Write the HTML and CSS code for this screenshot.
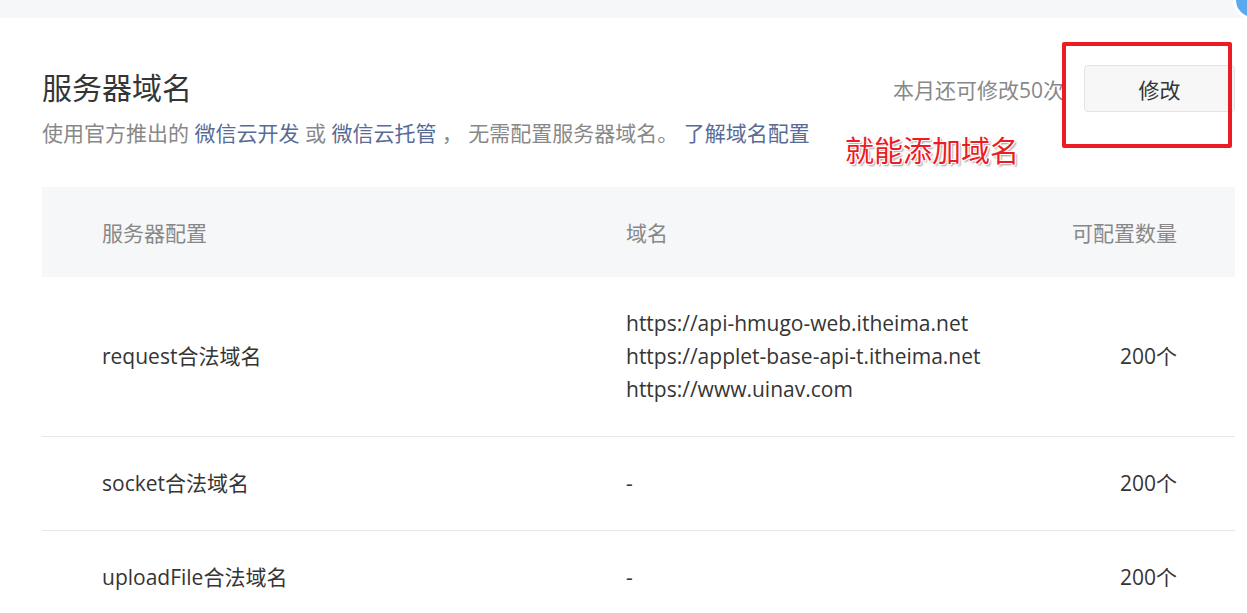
FILE: index.html
```html
<!DOCTYPE html>
<html lang="zh-CN">
<head>
  <meta charset="UTF-8">
  <meta name="viewport" content="width=device-width, initial-scale=1.0">
  <title>服务器域名</title>
  <link rel="stylesheet" href="styles.css">
</head>
<body>
  <div class="topbar">
    <span class="avatar"></span>
  </div>

  <div class="card">
    <div class="head">
      <div class="head-main">
        <h2 class="title">服务器域名</h2>
        <p class="desc">使用官方推出的 <a href="#">微信云开发</a> 或 <a href="#">微信云托管</a> ， 无需配置服务器域名。 <a href="#">了解域名配置</a></p>
      </div>
      <div class="head-side">
        <span class="quota">本月还可修改50次</span>
        <button type="button" class="btn">修改</button>
      </div>
    </div>

    <div class="mark"></div>
    <div class="note">就能添加域名</div>

    <table class="domains">
      <thead>
        <tr>
          <th class="col-name">服务器配置</th>
          <th class="col-domain">域名</th>
          <th class="col-count">可配置数量</th>
        </tr>
      </thead>
      <tbody>
        <tr>
          <td class="col-name">request合法域名</td>
          <td class="col-domain">
            https://api-hmugo-web.itheima.net<br>
            https://applet-base-api-t.itheima.net<br>
            https://www.uinav.com
          </td>
          <td class="col-count">200个</td>
        </tr>
        <tr>
          <td class="col-name">socket合法域名</td>
          <td class="col-domain">-</td>
          <td class="col-count">200个</td>
        </tr>
        <tr>
          <td class="col-name">uploadFile合法域名</td>
          <td class="col-domain">-</td>
          <td class="col-count">200个</td>
        </tr>
      </tbody>
    </table>
  </div>
</body>
</html>
```

FILE: styles.css
```css
body {
  margin: 0;
  background: #fff;
  font-family: "Open Sans", "Noto Sans CJK SC", sans-serif;
  color: #353535;
  overflow: hidden;
}

.topbar {
  height: 18px;
  background: #f6f7f9;
  position: relative;
  overflow: hidden;
}

.avatar {
  position: absolute;
  right: -26px;
  top: -20px;
  width: 34px;
  height: 34px;
  border-radius: 50%;
  background: #5aa9ee;
  border: 3px solid #fff;
}

.card {
  position: relative;
  padding: 49px 12px 0 42px;
}

.head {
  display: flex;
  justify-content: space-between;
  align-items: flex-start;
}

.title {
  margin: 0;
  font-size: 30px;
  font-weight: normal;
  line-height: 42px;
  color: #353535;
}

.desc {
  margin: 8px 0 0;
  font-size: 21px;
  line-height: 33px;
  color: #888;
}

.desc a {
  color: #576b95;
  text-decoration: none;
}

.head-side {
  display: flex;
  align-items: center;
  gap: 20px;
  margin-top: -2px;
}

.quota {
  font-size: 21px;
  color: #888;
}

.btn {
  width: 151px;
  height: 47px;
  font-family: inherit;
  font-size: 21px;
  color: #353535;
  background: #f7f7f7;
  border: 1px solid #e3e3e3;
  border-radius: 4px;
}

/* annotation overlay */
.mark {
  position: absolute;
  left: 1062px;
  top: 24px;
  width: 162px;
  height: 98px;
  border: 4px solid #ec1c24;
  border-radius: 2px;
}

.note {
  position: absolute;
  left: 845px;
  top: 110px;
  font-size: 29px;
  color: #ec1c24;
  text-shadow: 1px 1px 0 #fff, -1px -1px 0 #fff, 1px -1px 0 #fff, -1px 1px 0 #fff, 2px 2px 2px #9a9a9a;
}

.domains {
  width: 100%;
  margin-top: 37px;
  border-collapse: collapse;
  table-layout: fixed;
  font-size: 21px;
}

.domains th {
  height: 90px;
  padding: 0;
  background: #f6f7f9;
  font-weight: normal;
  color: #888;
  text-align: left;
}

.domains td {
  padding: 30px 0;
  line-height: 33px;
  border-bottom: 1px solid #e7e7e7;
}

.domains .col-name {
  padding-left: 60px;
  width: 524px;
}

.domains .col-count {
  text-align: right;
  padding-right: 58px;
  width: 160px;
}
```
